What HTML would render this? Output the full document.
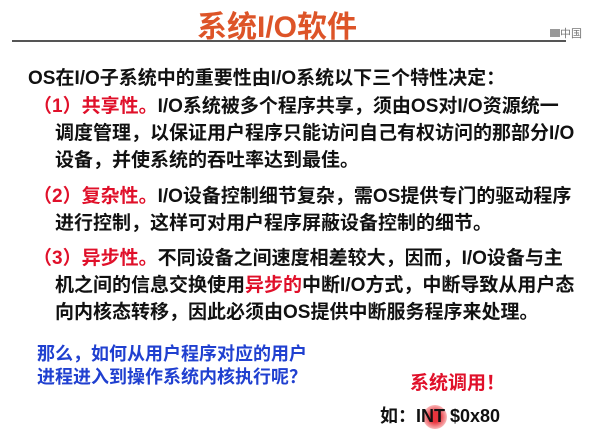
<!DOCTYPE html>
<html><head><meta charset="utf-8"><style>
body{margin:0;width:599px;height:443px;background:#fff;position:relative;overflow:hidden;font-family:"Liberation Sans","Noto Sans CJK SC",sans-serif;font-weight:bold;}
.a{position:absolute;white-space:nowrap;}
.t{font-size:19px;color:#111;}
.r{color:#e0102a;}
.b{color:#2040d0;font-size:18px;}
</style></head><body>
<div class="a" style="left:197px;top:2px;font-size:30px;color:#dd5428;">系统I/O软件</div>
<div class="a" style="left:12px;top:40px;width:554px;height:2px;background:#555;"></div>
<div class="a" style="left:550px;top:25px;font-size:11px;color:#777;font-weight:normal;"><span style="display:inline-block;width:10px;height:8px;background:#999;"></span>中国</div>
<div class="a t" style="left:28px;top:63px;">OS在I/O子系统中的重要性由I/O系统以下三个特性决定：</div>
<div class="a t" style="left:33px;top:91px;"><span class="r">（1）共享性。</span>I/O系统被多个程序共享，须由OS对I/O资源统一</div>
<div class="a t" style="left:55px;top:118px;">调度管理，以保证用户程序只能访问自己有权访问的那部分I/O</div>
<div class="a t" style="left:55px;top:145px;">设备，并使系统的吞吐率达到最佳。</div>
<div class="a t" style="left:33px;top:181px;"><span class="r">（2）复杂性。</span>I/O设备控制细节复杂，需OS提供专门的驱动程序</div>
<div class="a t" style="left:55px;top:208px;">进行控制，这样可对用户程序屏蔽设备控制的细节。</div>
<div class="a t" style="left:33px;top:243px;"><span class="r">（3）异步性。</span>不同设备之间速度相差较大，因而，I/O设备与主</div>
<div class="a t" style="left:55px;top:270px;">机之间的信息交换使用<span class="r">异步的</span>中断I/O方式，中断导致从用户态</div>
<div class="a t" style="left:55px;top:297px;">向内核态转移，因此必须由OS提供中断服务程序来处理。</div>
<div class="a b" style="left:37px;top:340px;">那么，如何从用户程序对应的用户</div>
<div class="a b" style="left:37px;top:363px;">进程进入到操作系统内核执行呢？</div>
<div class="a" style="left:423px;top:405px;width:24px;height:24px;border-radius:50%;background:radial-gradient(circle,rgba(230,30,40,0.9) 30%,rgba(240,60,60,0.3) 75%,transparent);"></div>
<div class="a" style="left:410px;top:368px;font-size:19px;color:#e0102a;">系统调用！</div>
<div class="a" style="left:380px;top:402px;font-size:18px;color:#111;">如：INT $0x80</div>
</body></html>
